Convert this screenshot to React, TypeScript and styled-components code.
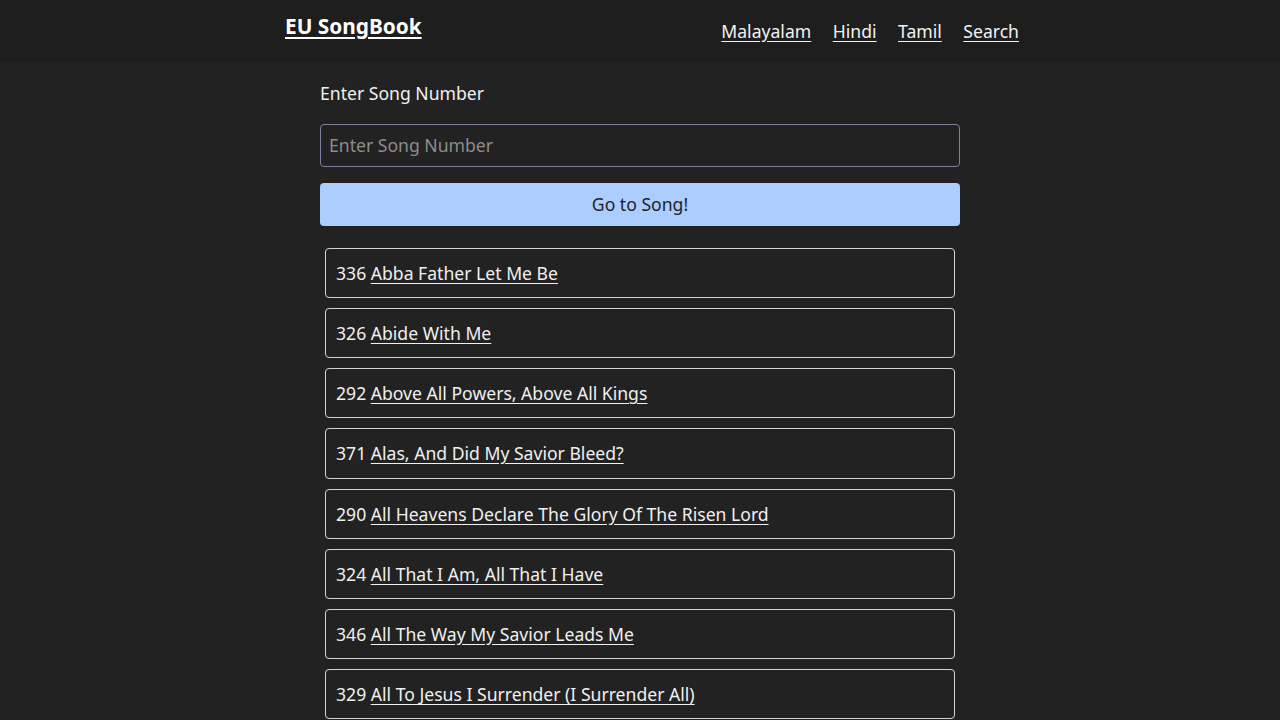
import React from "react";
import styled, { createGlobalStyle } from "styled-components";

const Global = createGlobalStyle`
  html, body { margin: 0; padding: 0; background: #222222; }
  body { font-family: "Noto Sans", "Open Sans", sans-serif; color: #e8e8e8; }
  * { box-sizing: border-box; }
`;

const Header = styled.header`
  background: #1e1e1e;
  height: 62px;
`;

const HeaderInner = styled.div`
  width: 758px;
  margin: 0 auto;
  padding-left: 24px;
  display: flex;
  justify-content: space-between;
  align-items: flex-start;
`;

const Brand = styled.a`
  margin-top: 12px;
  font-size: 20.8px;
  line-height: 28px;
  font-weight: 700;
  color: #ffffff;
  text-decoration: underline;
  text-underline-offset: 3px;
`;

const Nav = styled.nav`
  display: flex;
  gap: 21.5px;
  margin-top: 18px;
`;

const NavLink = styled.a`
  font-size: 17.6px;
  line-height: 26px;
  color: #f2f2f2;
  text-decoration: underline;
  text-underline-offset: 3px;
`;

const Main = styled.main`
  width: 640px;
  margin: 0 auto;
  padding-top: 18px;
  display: flex;
  flex-direction: column;
`;

const Label = styled.label`
  font-size: 17.6px;
  line-height: 26px;
  color: #f0f0f0;
`;

const Input = styled.input`
  margin-top: 18px;
  height: 43px;
  width: 100%;
  background: #222222;
  border: 1px solid #7c80a0;
  border-radius: 4px;
  padding: 0 8px 2px;
  font-family: "Noto Sans", sans-serif;
  font-size: 17.6px;
  color: #e8e8e8;
  outline: none;
  &::placeholder { color: #8c8c8c; }
`;

const Button = styled.button`
  margin-top: 16px;
  height: 43px;
  width: 100%;
  background: #abcdff;
  border: none;
  border-radius: 4px;
  padding: 0 0 2px;
  font-family: "Noto Sans", sans-serif;
  font-size: 17.6px;
  color: #222;
  cursor: pointer;
`;

const List = styled.ul`
  list-style: none;
  margin: 22px 0 0;
  padding: 0 5px;
  display: flex;
  flex-direction: column;
  gap: 10px;
`;

const Item = styled.li`
  height: 50.15px;
  border: 1px solid #d4d4d4;
  border-radius: 4px;
  padding: 0 10px;
  display: flex;
  align-items: center;
  font-size: 17.6px;
  color: #f0f0f0;
  white-space: pre;
`;

const SongLink = styled.a`
  color: #f0f0f0;
  text-decoration: underline;
  text-underline-offset: 3px;
`;

const songs: [number, string][] = [
  [336, "Abba Father Let Me Be"],
  [326, "Abide With Me"],
  [292, "Above All Powers, Above All Kings"],
  [371, "Alas, And Did My Savior Bleed?"],
  [290, "All Heavens Declare The Glory Of The Risen Lord"],
  [324, "All That I Am, All That I Have"],
  [346, "All The Way My Savior Leads Me"],
  [329, "All To Jesus I Surrender (I Surrender All)"],
];

export default function App() {
  return (
    <>
      <Global />
      <Header>
        <HeaderInner>
          <Brand href="#">EU SongBook</Brand>
          <Nav>
            <NavLink href="#">Malayalam</NavLink>
            <NavLink href="#">Hindi</NavLink>
            <NavLink href="#">Tamil</NavLink>
            <NavLink href="#">Search</NavLink>
          </Nav>
        </HeaderInner>
      </Header>
      <Main>
        <Label htmlFor="num">Enter Song Number</Label>
        <Input id="num" placeholder="Enter Song Number" />
        <Button>Go to Song!</Button>
        <List>
          {songs.map(([n, t]) => (
            <Item key={n}>
              {n + " "}
              <SongLink href="#">{t}</SongLink>
            </Item>
          ))}
        </List>
      </Main>
    </>
  );
}
